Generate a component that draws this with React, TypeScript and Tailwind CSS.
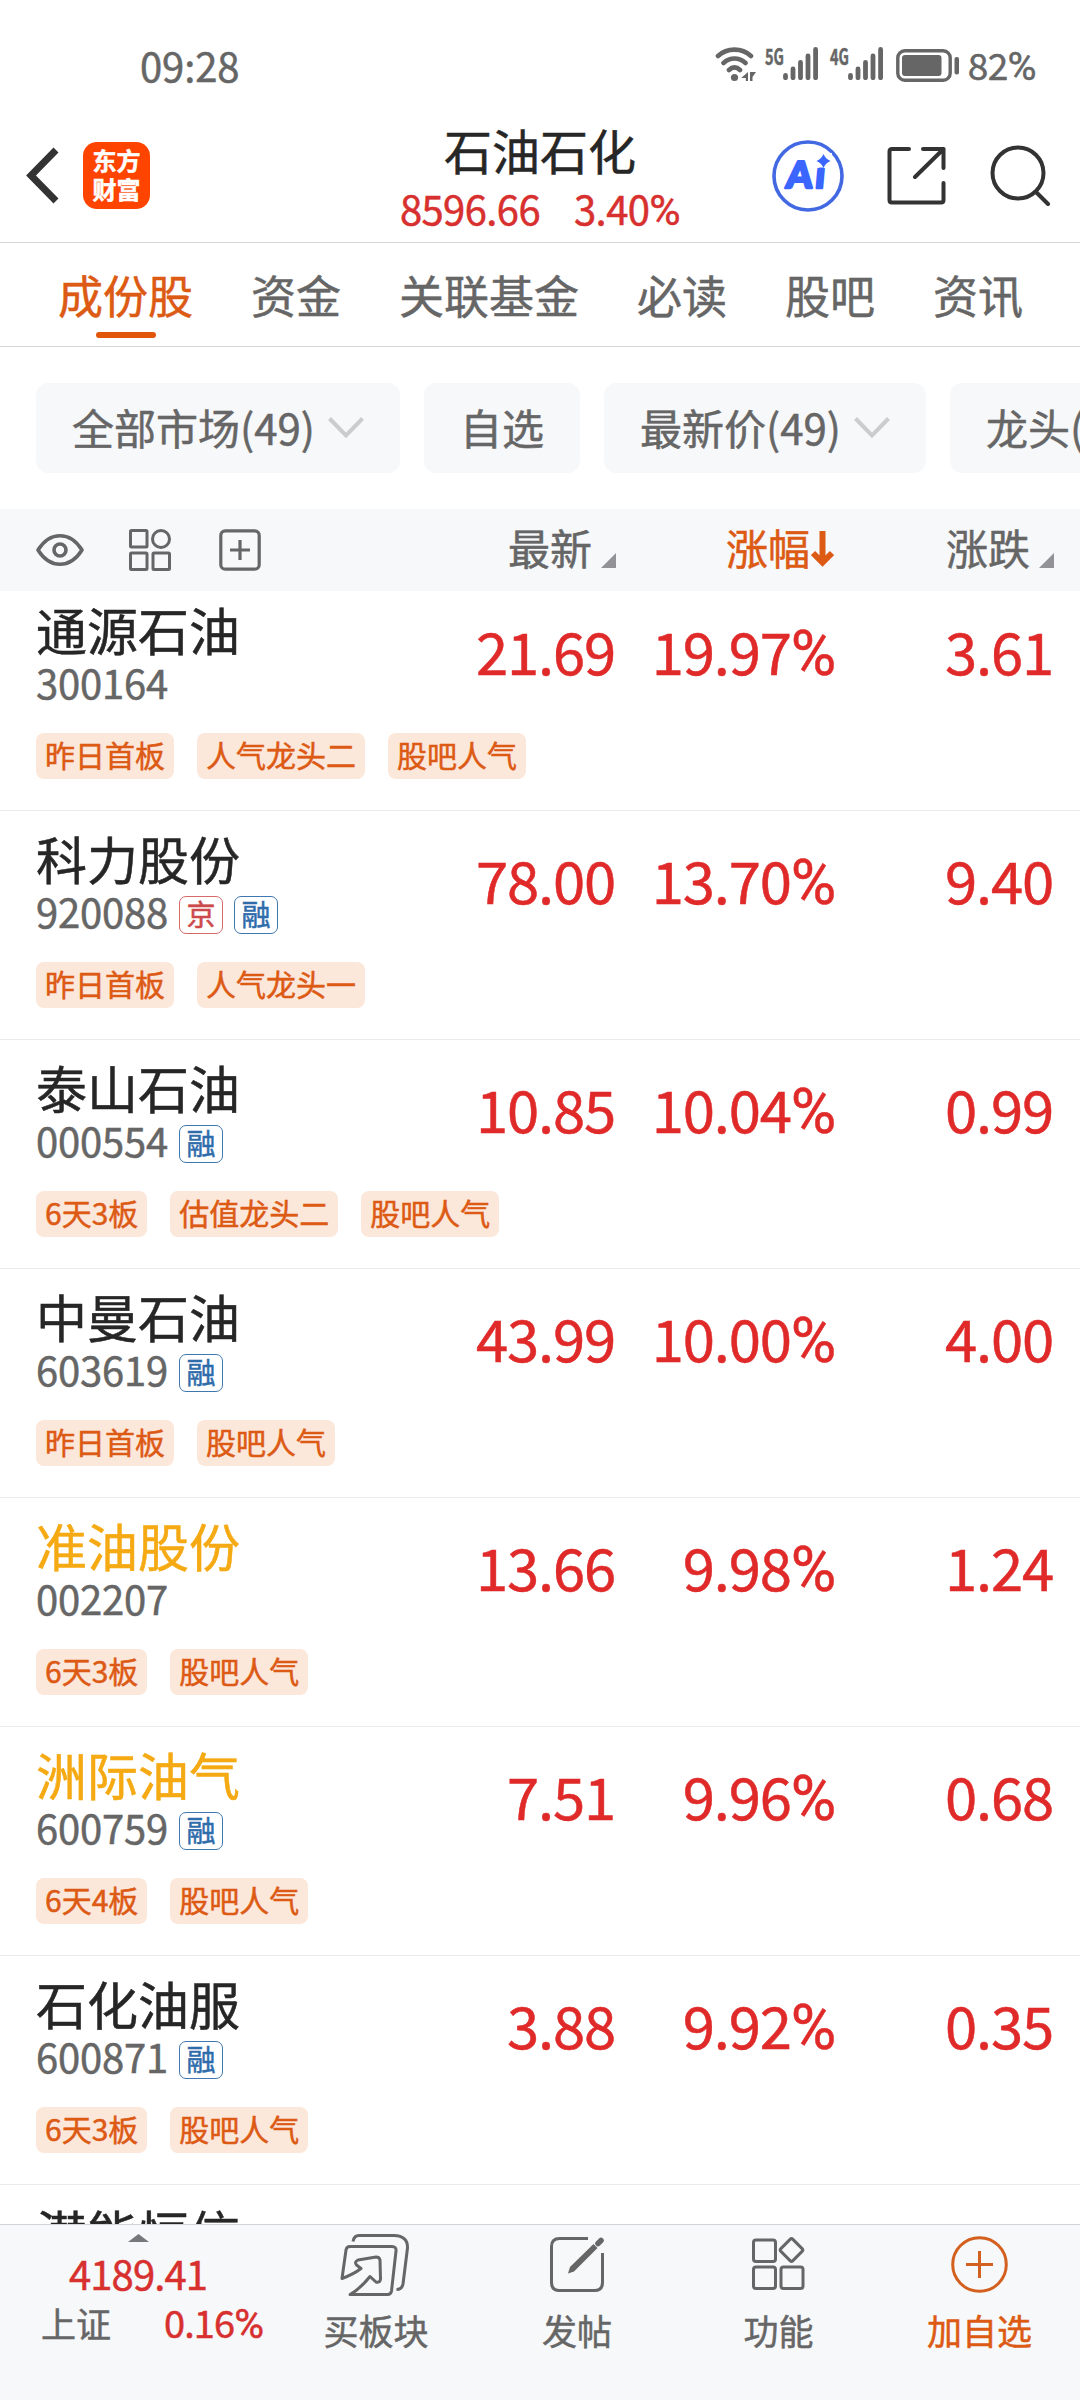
import React from 'react';

interface Stock {
  name: string;
  code: string;
  marks: string[];
  tags: string[];
  price: string;
  percent: string;
  change: string;
  watched?: boolean;
}

const stocks: Stock[] = [
  { name: '通源石油', code: '300164', marks: [], tags: ['昨日首板', '人气龙头二', '股吧人气'], price: '21.69', percent: '19.97', change: '3.61' },
  { name: '科力股份', code: '920088', marks: ['京', '融'], tags: ['昨日首板', '人气龙头一'], price: '78.00', percent: '13.70', change: '9.40' },
  { name: '泰山石油', code: '000554', marks: ['融'], tags: ['6天3板', '估值龙头二', '股吧人气'], price: '10.85', percent: '10.04', change: '0.99' },
  { name: '中曼石油', code: '603619', marks: ['融'], tags: ['昨日首板', '股吧人气'], price: '43.99', percent: '10.00', change: '4.00' },
  { name: '准油股份', code: '002207', marks: [], tags: ['6天3板', '股吧人气'], price: '13.66', percent: '9.98', change: '1.24', watched: true },
  { name: '洲际油气', code: '600759', marks: ['融'], tags: ['6天4板', '股吧人气'], price: '7.51', percent: '9.96', change: '0.68', watched: true },
  { name: '石化油服', code: '600871', marks: ['融'], tags: ['6天3板', '股吧人气'], price: '3.88', percent: '9.92', change: '0.35' },
];

const tabs = ['成份股', '资金', '关联基金', '必读', '股吧', '资讯'];

const filters = [
  { label: '全部市场(49)', arrow: true, width: 'w-[364px]' },
  { label: '自选', arrow: false, width: 'w-[156px]' },
  { label: '最新价(49)', arrow: true, width: 'w-[322px]' },
  { label: '龙头(49)', arrow: true, width: 'w-[280px]' },
];

const Percent = () => <span className="font-['Roboto'] text-[1.07em]">%</span>;

const Signal: React.FC<{ label: string }> = ({ label }) => (
  <div className="flex h-[33px] items-start">
    <span className="w-[18px] origin-left scale-x-[0.66] text-[22px] leading-[16px] font-bold whitespace-nowrap">{label}</span>
    <svg width="35" height="33" viewBox="0 0 35 33" fill="none" stroke="currentColor" strokeWidth="4.8" strokeLinecap="round">
      <path d="M2.5 28.5v2.2M10 22v8.7M17.5 15.5v15.2M25 9v21.7M32.6 2.5v28.2" />
    </svg>
  </div>
);

const StatusBar = () => (
  <div className="flex h-[108px] items-start justify-between pt-[47px] pr-[44px] pl-[140px] text-[#666]">
    <span className="-mt-[2px] text-[40px] leading-[40px] tracking-[-0.1px]">09:28</span>
    <div className="flex items-start">
      <svg className="mr-[8px]" width="42" height="35" viewBox="0 0 42 35" fill="none" stroke="currentColor" strokeWidth="4.6" strokeLinecap="round">
        <path d="M3 9C12 0.500 27 0.500 36 9M8.500 16C15 10 24 10 30.500 16M14 23C17.500 19.500 21.500 19.500 25 23" />
        <circle cx="19.500" cy="30.500" r="3.600" fill="currentColor" stroke="none" />
        <path d="M33 25v9h-2.200v-3h-4.600zM35 25h6l-3.500 5v4h-2.500z" fill="currentColor" stroke="none" />
      </svg>
      <Signal label="5G" />
      <div className="w-[12px]" />
      <Signal label="4G" />
      <svg className="mt-[2px] ml-[13px]" width="63" height="33" viewBox="0 0 63 33" fill="none">
        <rect x="1.800" y="1.800" width="52.400" height="29.400" rx="7" stroke="currentColor" strokeWidth="3.400" />
        <rect x="6" y="6" width="39.500" height="21" rx="3" fill="currentColor" />
        <rect x="58.500" y="8" width="4.500" height="17.500" rx="2" fill="currentColor" />
      </svg>
      <span className="-mt-[1px] ml-[9px] text-[37px] leading-[37px] tracking-[-0.6px]">82<Percent /></span>
    </div>
  </div>
);

const Header = () => (
  <header className="flex h-[135px] items-start border-b border-[#d8d8d8] text-[#333]">
    <svg className="mt-[37px] ml-[23px]" width="36" height="60" viewBox="0 0 36 60" fill="none" stroke="currentColor" strokeWidth="7">
      <path d="M33 5L8 30.500L33 56" />
    </svg>
    <div className="mt-[34px] ml-[24px] flex size-[67px] flex-col items-center justify-center rounded-[14px] bg-[#ff4400] pb-[4px] text-[24px] leading-[29px] font-bold text-white">
      <span>东方</span>
      <span>财富</span>
    </div>
    <div className="ml-[230px] flex w-[320px] flex-col items-center">
      <h1 className="mt-[17px] text-[48px] leading-[48px] text-[#262626]">石油石化</h1>
      <div className="mt-[11px] flex gap-[34px] text-[40px] leading-[48px] tracking-[-0.6px] text-[#d7302f]">
        <span>8596.66</span>
        <span>3.40<Percent /></span>
      </div>
    </div>
    <svg className="mt-[31px] ml-[71px]" width="74" height="74" viewBox="0 0 74 74" fill="none">
      <circle cx="37" cy="37" r="34" stroke="#4369e2" strokeWidth="3.600" />
      <text transform="translate(14.500 49) skewX(-5)" x="0 29" fontSize="37" fontWeight="900" fill="#3a66ff" stroke="#3a66ff" strokeWidth="2.500" strokeLinejoin="round" className="font-['Lato']">Ai</text>
      {/* the dot of the "i" is a sparkle */}
      <rect x="43" y="14" width="18" height="14.500" fill="#fff" />
      <path d="M52.500 15q2 5 7 7q-5 2-7 7q-2-5-7-7q5-2 7-7z" fill="#3a66ff" />
    </svg>
    <svg className="mt-[38px] ml-[41px]" width="60" height="60" viewBox="0 0 60 60" fill="none" stroke="currentColor" strokeWidth="4" strokeLinecap="round" strokeLinejoin="round">
      <path d="M23 3H6Q3.500 3 3.500 5.500V54Q3.500 56.500 6 56.500H55Q57.500 56.500 57.500 54V37M37 3H57.500V22M57.500 3L29 31" />
    </svg>
    <svg className="mt-[36px] ml-[43px]" width="62" height="62" viewBox="0 0 62 62" fill="none" stroke="currentColor" strokeWidth="4" strokeLinecap="round">
      <circle cx="29" cy="29" r="25.500" />
      <path d="M47 48L59 60" />
    </svg>
  </header>
);

const Chevron = () => (
  <svg width="36" height="22" viewBox="0 0 36 22" fill="none" stroke="#ccc" strokeWidth="4">
    <path d="M1.500 1.500L18 18.500L34.500 1.500" />
  </svg>
);

const SortMark = () => (
  <svg className="mt-[26px] ml-[9px]" width="15" height="15" viewBox="0 0 15 15">
    <path d="M15 0V15H0z" fill="#929297" />
  </svg>
);

const TableHead = () => (
  <div className="relative z-10 flex h-[82px] items-center bg-[#f7f8fa] text-[42px] leading-[72px] text-[#666]">
    <svg className="ml-[36px]" width="48" height="34" viewBox="0 0 48 34" fill="none" stroke="currentColor" strokeWidth="3.600" strokeLinejoin="round">
      <path d="M2 17C14-2 34-2 46 17C34 36 14 36 2 17z" />
      <circle cx="24" cy="17" r="6" />
    </svg>
    <svg className="ml-[45px]" width="42" height="42" viewBox="0 0 42 42" fill="none" stroke="currentColor" strokeWidth="3">
      <rect x="1.500" y="1.500" width="16.500" height="16.500" rx="1" />
      <circle cx="32" cy="10" r="8.500" />
      <rect x="1.500" y="24" width="16.500" height="16.500" rx="1" />
      <rect x="24" y="24" width="16.500" height="16.500" rx="1" />
    </svg>
    <svg className="ml-[48px]" width="42" height="42" viewBox="0 0 42 42" fill="none" stroke="currentColor" strokeWidth="3.200">
      <rect x="1.800" y="1.800" width="38.400" height="38.400" rx="4.500" />
      <path d="M21 11V31M11 21H31" />
    </svg>
    <div className="-mt-[6px] flex w-[355px] items-center justify-end">最新<SortMark /></div>
    <div className="-mt-[6px] flex w-[218px] items-center justify-end text-[#dc5a14]">
      涨幅
      <svg className="mt-[3px] ml-[1px]" width="23" height="36" viewBox="0 0 23 36" fill="none" stroke="currentColor" strokeWidth="6">
        <path d="M11.500 0V32M2 22L11.500 31.500L21 22" />
      </svg>
    </div>
    <div className="-mt-[6px] flex w-[220px] items-center justify-end">涨跌<SortMark /></div>
  </div>
);

const StockRow: React.FC<{ stock: Stock }> = ({ stock }) => (
  <div className="flex h-[229px] border-b border-[#ebebeb] pl-[36px]">
    <div className="w-[420px] shrink-0">
      <div className={`mt-[17px] text-[51px] leading-[60px] ${stock.watched ? 'text-[#f5a912]' : 'text-[#262626]'}`}>{stock.name}</div>
      <div className="flex h-[46px] items-center gap-[11px] text-[40px] leading-[46px] text-[#666]">
        <span className="tracking-[-0.2px]">{stock.code}</span>
        {stock.marks.map(mark => (
          <span
            key={mark}
            className={`mt-[7px] flex h-[38px] w-[44px] items-center justify-center rounded-[7px] border text-[29px] leading-[30px] ${
              mark === '京' ? 'border-[#d66a6a] text-[#cc4a4a]' : 'border-[#3f78b0] text-[#2f6cab]'
            }`}
          >
            <span className="-mt-[3px]">{mark}</span>
          </span>
        ))}
      </div>
      <div className="mt-[28px] flex gap-[23px]">
        {stock.tags.map(tag => (
          <span key={tag} className="h-[46px] rounded-[8px] bg-[#fce7db] px-[9px] text-[30px] leading-[43px] whitespace-nowrap text-[#dc5a14]">{tag}</span>
        ))}
      </div>
    </div>
    <div className="mt-[38px] flex text-[58px] leading-[60px] tracking-[-1.2px] text-[#e02a2a]">
      <span className="w-[159px] text-right">{stock.price}</span>
      <span className="w-[220px] text-right">{stock.percent}<Percent /></span>
      <span className="w-[218px] text-right">{stock.change}</span>
    </div>
  </div>
);

const BottomBar = () => (
  <footer className="flex h-[176px] border-t border-[#d0d3d7] bg-[#f7f8fa] text-[35px] leading-[40px] text-[#666]">
    <div className="flex w-[276px] flex-col items-center pt-[9px]">
      <svg width="21" height="8" viewBox="0 0 21 8"><path d="M10.500 0L21 8H0z" fill="#77787c" /></svg>
      <div className="mt-[9px] text-[40px] leading-[44px] tracking-[-0.9px] text-[#d7302f]">4189.41</div>
      <div className="mt-[7px] flex w-full items-center pl-[41px]">
        <span>上证</span>
        <span className="ml-[53px] text-[38px] tracking-[-0.9px] text-[#d7302f]">0.16<Percent /></span>
      </div>
    </div>
    <div className="flex w-[200px] flex-col items-center pt-[9px]">
      <svg className="-ml-[2px]" width="70" height="62" viewBox="0 0 70 62" fill="none" stroke="currentColor" strokeWidth="3" strokeLinejoin="round">
        <path d="M13 7.500Q14 1.500 19 1.500H54Q68 2 67.500 14L63 50Q62 55.500 56.500 55.500" />
        <path d="M2 44.500L6 16Q6.500 12.500 10 12.500H52Q56.500 12.500 56 17L51.500 57Q51 60.500 47.500 60.500H10Q20 55 30 42.500L36 48Q40 49 40.500 45L40 26Q39.500 23 36 23L18 26Q14 28 16.500 31L21 34.500Q14 40 2 44.500z" />
      </svg>
      <span className="mt-[14px]">买板块</span>
    </div>
    <div className="flex w-[202px] flex-col items-center pt-[12px]">
      <svg width="54" height="55" viewBox="0 0 54 55" fill="none" stroke="currentColor" strokeWidth="3">
        <path d="M38 1.500H9.500Q1.500 1.500 1.500 9.500V45.500Q1.500 53.500 9.500 53.500H44.500Q52.500 53.500 52.500 45.500V16" />
        <path d="M18 36.500L20 30L43.500 7L47.500 11L24 34.500z" fill="currentColor" stroke="none" />
        <path d="M48 6.500L51 3.500" strokeWidth="5.500" strokeLinecap="round" />
      </svg>
      <span className="mt-[18px]">发帖</span>
    </div>
    <div className="flex w-[201px] flex-col items-center pt-[12px]">
      <svg width="53" height="55" viewBox="0 0 53 55" fill="none" stroke="currentColor" strokeWidth="3" strokeLinejoin="round">
        <rect x="1.500" y="3" width="22" height="21.500" rx="2.500" />
        <rect x="1.500" y="30" width="22" height="21.500" rx="2.500" />
        <rect x="29" y="30" width="22" height="21.500" rx="2.500" />
        <rect x="31" y="4.500" width="17" height="17" rx="2" transform="rotate(45 39.500 13)" />
      </svg>
      <span className="mt-[18px]">功能</span>
    </div>
    <div className="flex w-[201px] flex-col items-center pt-[11px] text-[#d4601f]">
      <svg width="57" height="57" viewBox="0 0 57 57" fill="none" stroke="currentColor" strokeWidth="3">
        <circle cx="28.500" cy="28.500" r="26.800" />
        <path d="M28.500 15V42M15 28.500H42" />
      </svg>
      <span className="mt-[17px] text-[#dc5a14]">加自选</span>
    </div>
  </footer>
);

const App = () => (
  <div className="flex h-[2400px] w-[1080px] flex-col overflow-hidden bg-white font-['Noto_Sans_CJK_SC',sans-serif] [-webkit-text-stroke:0.5px]">
    <StatusBar />
    <Header />
    <nav className="flex h-[104px] items-start gap-[58px] border-b border-[#d8d8d8] pl-[58px] text-[45px] leading-[60px] text-[#666]">
      {tabs.map((tab, i) => (
        <div key={tab} className={`flex shrink-0 flex-col items-center pt-[22px] ${i === 0 ? 'text-[#dc5a14]' : ''}`}>
          <span>{tab}</span>
          {i === 0 && <div className="mt-[7px] h-[6px] w-[60px] rounded-full bg-[#e2560a]" />}
        </div>
      ))}
    </nav>
    <div className="flex h-[162px] items-start gap-[24px] overflow-hidden pt-[36px] pl-[36px]">
      {filters.map(f => (
        <div key={f.label} className={`flex h-[90px] shrink-0 items-center justify-between rounded-[12px] bg-[#f7f8fa] px-[36px] text-[42px] text-[#666] ${f.width}`}>
          <span className="-mt-[3px] whitespace-nowrap">{f.label}</span>
          {f.arrow && <Chevron />}
        </div>
      ))}
    </div>
    <TableHead />
    <div className="-mt-[9px] min-h-0 flex-1 overflow-hidden">
      {stocks.map(stock => (
        <StockRow key={stock.code} stock={stock} />
      ))}
      <div className="pt-[17px] pl-[36px] text-[51px] leading-[60px] text-[#262626]">潜能恒信</div>
    </div>
    <BottomBar />
  </div>
);

export default App;
